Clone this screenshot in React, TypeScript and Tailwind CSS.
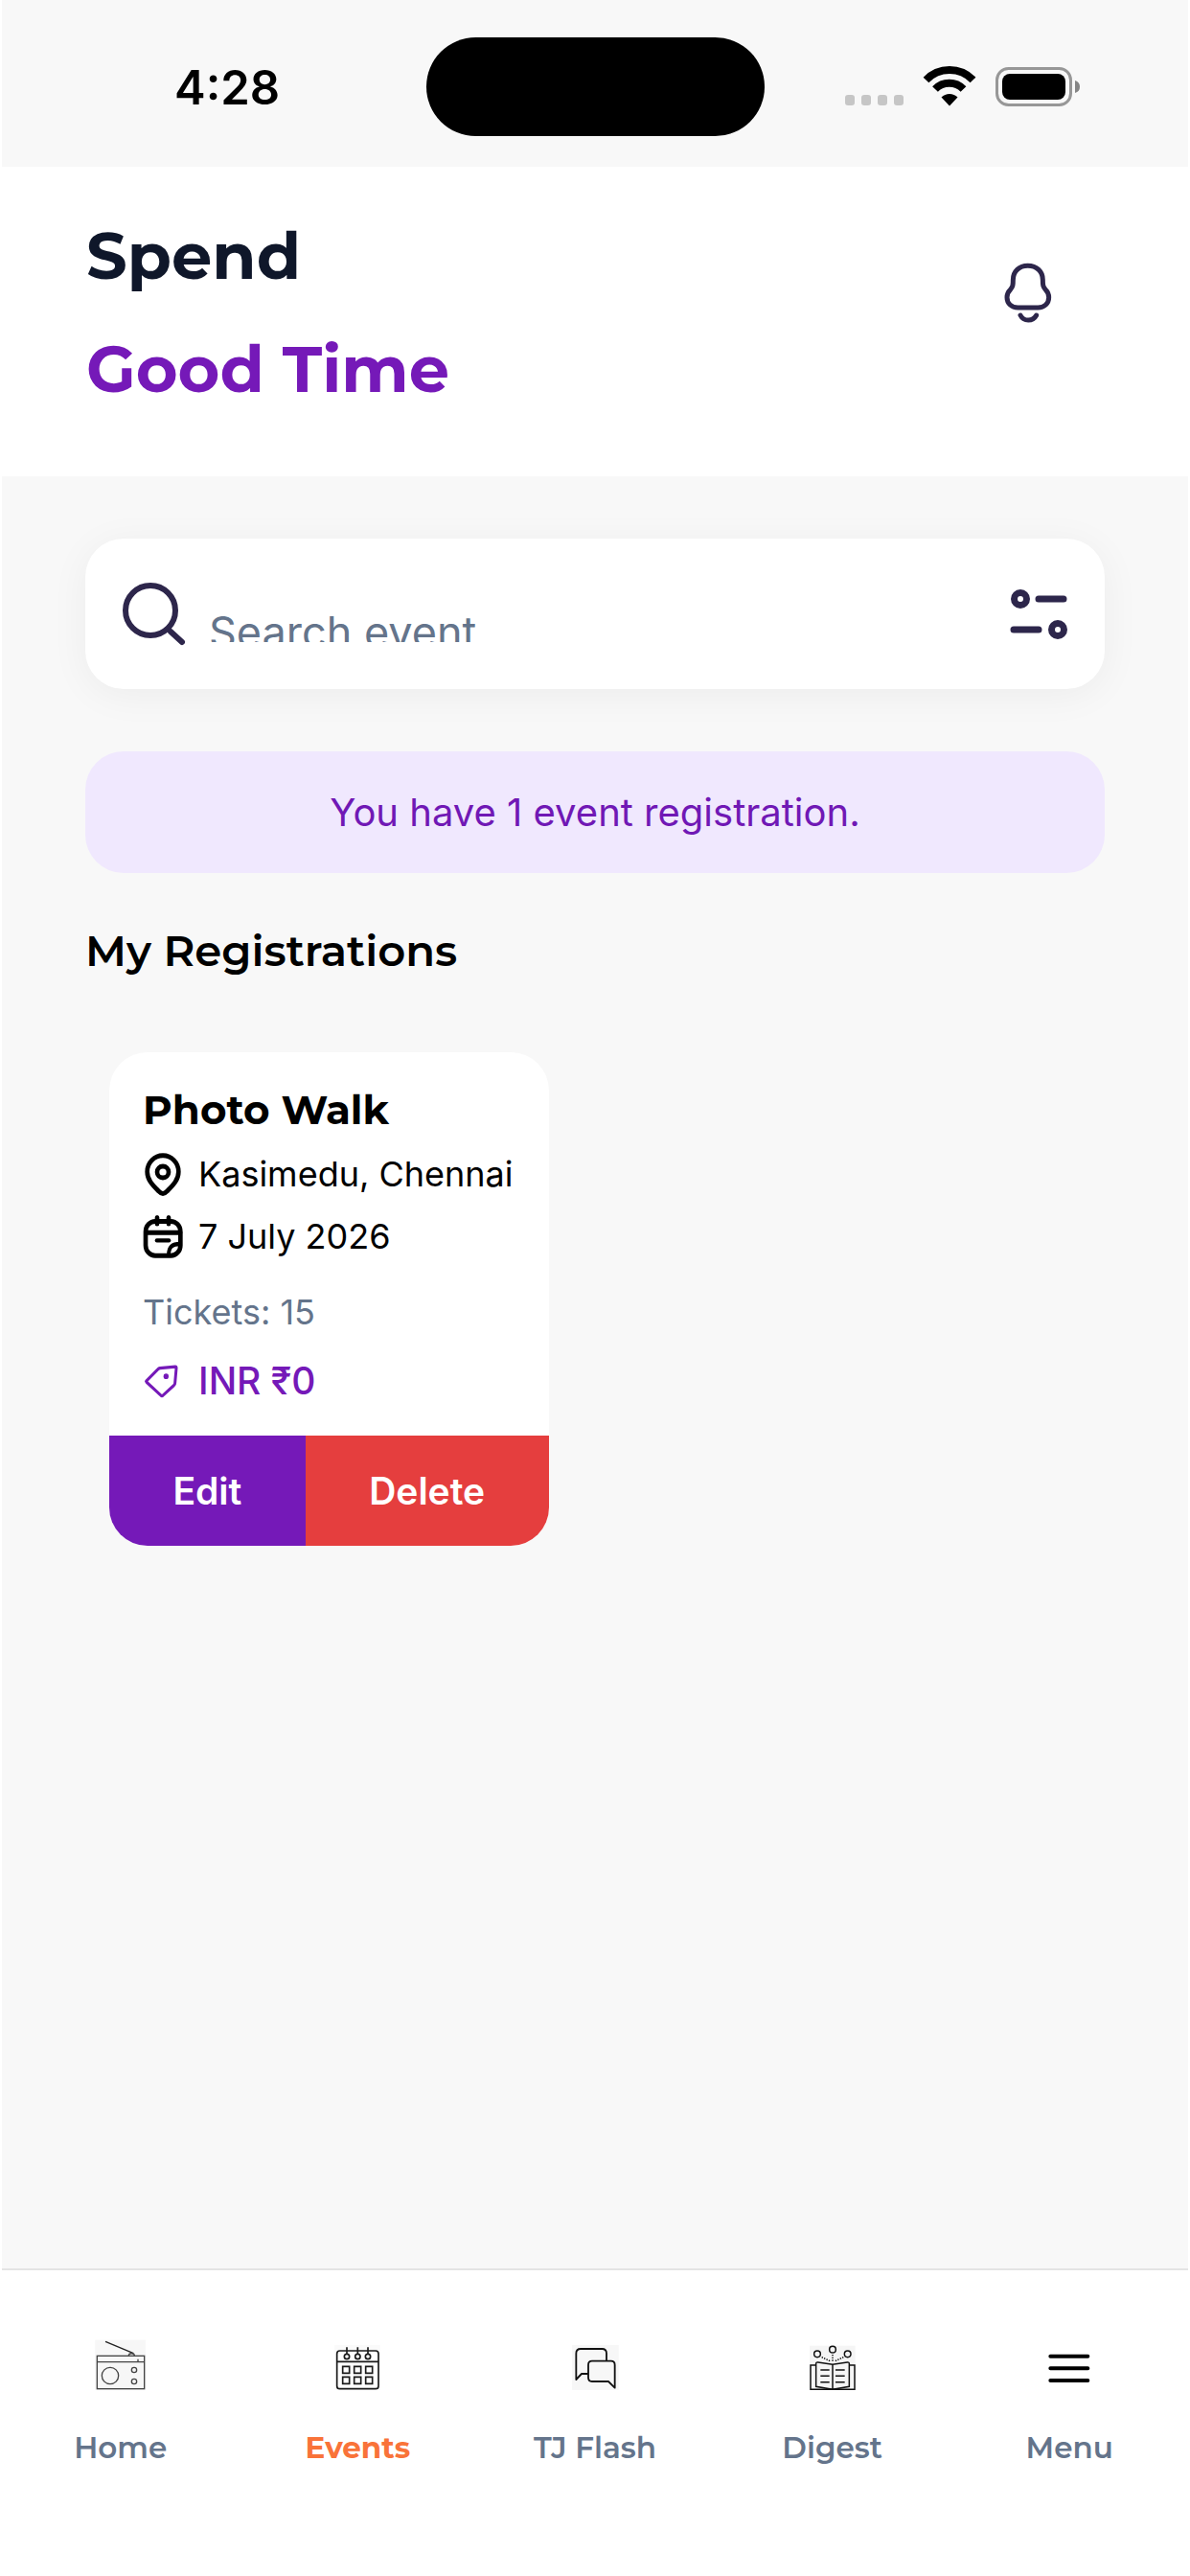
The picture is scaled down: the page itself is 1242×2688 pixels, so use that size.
import type { ReactNode } from "react";

const StatusBar = () => (
  <div className="grid h-[174px] grid-cols-[1fr_353px_1fr] bg-[#f8f8f8]">
    <div className="pt-[60px] pl-[180px] text-[49px] leading-[64px] font-semibold text-black">4:28</div>
    <div className="mt-[39px] h-[103px] rounded-full bg-black" />
    <div className="flex items-start justify-end pt-[68px] pr-[113px]">
      <svg width="246" height="44" viewBox="0 0 246 44" role="img" aria-label="Signal, Wi-Fi and battery">
        <g fill="#c6c6c6">
          <rect x="1" y="31" width="10" height="11" rx="3" />
          <rect x="18" y="31" width="10" height="11" rx="3" />
          <rect x="35" y="31" width="10" height="11" rx="3" />
          <rect x="52" y="31" width="10" height="11" rx="3" />
        </g>
        <g fill="none" stroke="#000" strokeWidth="8">
          <path d="M85.500 15.500 A34 34 0 0 1 134.500 15.500" />
          <path d="M95 25 A20.500 20.500 0 0 1 124.500 25" />
        </g>
        <path d="M101.500 33.500 A12 12 0 0 1 118.500 33.500 L110 42.500Z" fill="#000" />
        <rect x="159.500" y="3.500" width="77" height="38" rx="12" fill="none" stroke="#979797" strokeWidth="3" />
        <rect x="165" y="9" width="66" height="27" rx="8" fill="#000" />
        <path d="M241 16 q5 1.500 5 6.500 t-5 6.500z" fill="#858585" />
      </svg>
    </div>
  </div>
);

const PinIcon = () => (
  <svg width="42" height="45" viewBox="148 344 126 126" preserveAspectRatio="none" fill="none" stroke="#000" strokeWidth="14" aria-hidden="true">
    <path d="M211 463 Q205 463 198 456 C181 440 162 424 162 399 A49 47 0 0 1 260 399 C260 424 241 440 224 456 Q217 463 211 463Z" />
    <ellipse cx="211" cy="400" rx="18" ry="17" />
  </svg>
);

const CalendarNoteIcon = () => (
  <svg width="42" height="45" viewBox="148 526 126 126" preserveAspectRatio="none" fill="none" stroke="#000" strokeWidth="14" strokeLinecap="round" strokeLinejoin="round" aria-hidden="true">
    <rect x="157" y="544" width="109" height="100" rx="30" />
    <path d="M193 533v18M229 533v18M158 577h107" />
    <path d="M192 600h38" strokeWidth="12" />
    <path d="M229 643 C229 618 240 610 265 610" strokeWidth="12" />
  </svg>
);

const TagIcon = () => (
  <svg width="42" height="45" viewBox="148 947 126 126" preserveAspectRatio="none" fill="none" stroke="#7519b8" strokeWidth="9" strokeLinejoin="round" aria-hidden="true">
    <path d="M159 1009 L196 974 Q198 972 202 971 L250 967 Q253 967 253 971 L249 1014 Q249 1019 245 1022 L211 1051 Q208 1054 205 1051 L160 1012 Q158 1010 159 1009Z" />
    <circle cx="221" cy="995" r="8" fill="#7519b8" stroke="none" />
  </svg>
);

const HomeIcon = () => (
  <svg width="54" height="54" viewBox="118 60 162 162" fill="none" stroke="#444" strokeWidth="4" aria-hidden="true">
    <rect x="119" y="65" width="158" height="157" fill="#f7f7f7" stroke="none" />
    <rect x="125" y="115" width="148" height="103" />
    <path d="M125 134h148" />
    <path d="M151 70l88 37" stroke="#222" />
    <path d="M224 114c0-9 18-9 18 0M253 125v9" />
    <circle cx="166" cy="177" r="26" />
    <circle cx="241" cy="159" r="8" />
    <circle cx="241" cy="195" r="8" />
  </svg>
);

const EventsIcon = () => (
  <svg width="54" height="54" viewBox="108 60 162 162" fill="none" stroke="#1a1a1a" strokeWidth="5" aria-hidden="true">
    <rect x="118" y="81" width="142" height="141" fill="#fafafa" stroke="none" />
    <rect x="125" y="99" width="130" height="119" rx="9" fill="#fff" />
    <path d="M125 133h130M156 88v20M190 88v20M222 88v20" />
    <g fill="#fff">
      <circle cx="156" cy="117" r="8" />
      <circle cx="190" cy="117" r="8" />
      <circle cx="222" cy="117" r="8" />
    </g>
    <path d="M143 148h21v21h-21zM179 148h21v21h-21zM215 148h21v21h-21zM143 181h21v21h-21zM179 181h21v21h-21zM215 181h21v21h-21z" />
  </svg>
);

const FlashIcon = () => (
  <svg width="54" height="54" viewBox="99 60 162 162" fill="none" stroke="#111" strokeWidth="5.500" strokeLinejoin="round" aria-hidden="true">
    <rect x="108" y="81" width="146" height="141" fill="#f7f7f7" stroke="none" />
    <path d="M158 171H138L121 189V107Q121 93 135 93H202Q216 93 216 107V131" />
    <path d="M171 131H230Q242 131 242 143V215L222 195H171Q159 195 159 183V143Q159 131 171 131Z" />
  </svg>
);

const DigestIcon = () => (
  <svg width="54" height="54" viewBox="123 60 162 162" fill="none" stroke="#111" strokeWidth="4.500" aria-hidden="true">
    <rect x="132" y="83" width="143" height="139" fill="#f5f5f5" stroke="none" />
    <circle cx="204" cy="95" r="10" />
    <circle cx="156" cy="109" r="10" />
    <circle cx="251" cy="109" r="10" />
    <path d="M204 111v24M170 119l26 12M238 119l-26 12" strokeDasharray="4 4" />
    <path d="M152 144H135V220H273V144H256" />
    <path d="M204 142L158 135Q152 134 152 140V211L204 220L256 211V140Q256 134 250 135Z" />
    <path d="M204 142v78M166 159h28M166 178h28M166 197h28M213 159h29M213 178h29M213 197h29" />
  </svg>
);

const MenuIcon = () => (
  <svg width="54" height="54" viewBox="146 240 162 162" fill="none" stroke="#000" strokeWidth="12" strokeLinecap="round" aria-hidden="true">
    <path d="M168 296h117M168 334h117M168 372h117" />
  </svg>
);

const tabs: { label: string; icon: ReactNode; active?: boolean }[] = [
  { label: "Home", icon: <HomeIcon /> },
  { label: "Events", icon: <EventsIcon />, active: true },
  { label: "TJ Flash", icon: <FlashIcon /> },
  { label: "Digest", icon: <DigestIcon /> },
  { label: "Menu", icon: <MenuIcon /> },
];

const display = "font-[Montserrat,Inter,sans-serif]";

export default function App() {
  return (
    <div className="flex min-h-screen flex-col bg-white px-[2px] font-[Inter,sans-serif]">
      <StatusBar />

      <header className="flex items-start justify-between bg-white pt-[34px] pr-[137px] pb-[53px] pl-[88px]">
        <h1 className={`${display} text-[67px] leading-[118px] font-bold`}>
          <span className="block text-[#0f172a]">Spend</span>
          <span className="block text-[#7519b8]">Good Time</span>
        </h1>
        <button type="button" aria-label="Notifications" className="mt-[64px]">
          <svg width="60" height="70" viewBox="126 96 180 210" fill="none" stroke="#2d264b" strokeWidth="15" strokeLinecap="round">
            <path d="M215 112C188 112 169 130 169 156C169 174 168 177 161 186C154 193 150 201 150 211C150 230 164 243 184 243H247C267 243 281 230 281 211C281 201 277 193 270 186C263 177 262 174 262 156C262 130 243 112 215 112Z" />
            <path d="M192 267C202 287 231 287 242 267" />
          </svg>
        </button>
      </header>

      <main className="flex flex-1 flex-col items-start bg-[#f8f8f8] px-[87px] pt-[65px]">
        <div className="flex h-[157px] w-full items-center rounded-[40px] bg-white pr-[35px] pl-[37px] shadow-[0_6px_40px_rgba(0,0,0,0.05)]">
          <svg width="70" height="70" viewBox="0 0 70 70" fill="none" stroke="#2d264b" strokeWidth="6" strokeLinecap="round" className="shrink-0" aria-hidden="true">
            <circle cx="31" cy="31" r="26" />
            <path d="M52 53l12 11" />
          </svg>
          <div className="ml-[22px] h-[58px] flex-1 overflow-hidden pt-[20px]">
            <input
              type="text"
              aria-label="Search event"
              placeholder="Search event"
              className="block h-[56px] w-full bg-transparent text-[45px] leading-[56px] text-[#64748b] outline-none placeholder:text-[#64748b]"
            />
          </div>
          <button type="button" aria-label="Filter" className="shrink-0">
            <svg width="66" height="60" viewBox="0 0 66 60" fill="none" stroke="#2d264b" strokeWidth="7" strokeLinecap="round">
              <circle cx="13" cy="14" r="6.500" />
              <path d="M32 14h26M6 46h26" />
              <circle cx="52" cy="46" r="6.500" />
            </svg>
          </button>
        </div>

        <p className="mt-[65px] w-full rounded-[40px] bg-[#f0e8fe] py-[36px] text-center text-[40px] leading-[55px] text-[#7018b5]">
          You have 1 event registration.
        </p>

        <h2 className={`${display} mt-[53px] text-[45px] leading-[56px] font-semibold text-black`}>My Registrations</h2>

        <article className="mt-[78px] ml-[25px] overflow-hidden rounded-[40px] bg-white">
          <div className="pt-[34px] pr-[37px] pb-[27px] pl-[35px] text-black">
            <h3 className={`${display} text-[42px] leading-[52px] font-bold`}>Photo Walk</h3>
            <p className="mt-[9px] flex items-center text-[36px] leading-[65px]">
              <PinIcon />
              <span className="ml-[16px]">Kasimedu, Chennai</span>
            </p>
            <p className="flex items-center text-[36px] leading-[65px]">
              <CalendarNoteIcon />
              <span className="ml-[16px]">7 July 2026</span>
            </p>
            <p className="mt-[18px] text-[36px] leading-[56px] text-[#64748b]">Tickets: 15</p>
            <p className="mt-[14px] flex items-center text-[39px] leading-[60px] font-medium text-[#7519b8]">
              <TagIcon />
              <span className="ml-[16px]">INR ₹0</span>
            </p>
          </div>
          <div className="flex text-[39px] leading-[115px] font-semibold text-white">
            <button type="button" className="grow bg-[#7519b8] px-[64px]">
              Edit
            </button>
            <button type="button" className="grow bg-[#e53e3e] px-[64px]">
              Delete
            </button>
          </div>
        </article>
      </main>

      <nav className="grid grid-cols-5 border-t-2 border-[#e4e4e4] bg-white pt-[71px] pb-[114px]">
        {tabs.map((tab) => (
          <a
            key={tab.label}
            href="#"
            aria-current={tab.active ? "page" : undefined}
            className={`${display} flex flex-col items-center text-[31px] leading-[40px] ${
              tab.active ? "font-bold text-[#f97339]" : "font-semibold text-[#64748b]"
            }`}
          >
            {tab.icon}
            <span className="mt-[40px]">{tab.label}</span>
          </a>
        ))}
      </nav>
    </div>
  );
}
